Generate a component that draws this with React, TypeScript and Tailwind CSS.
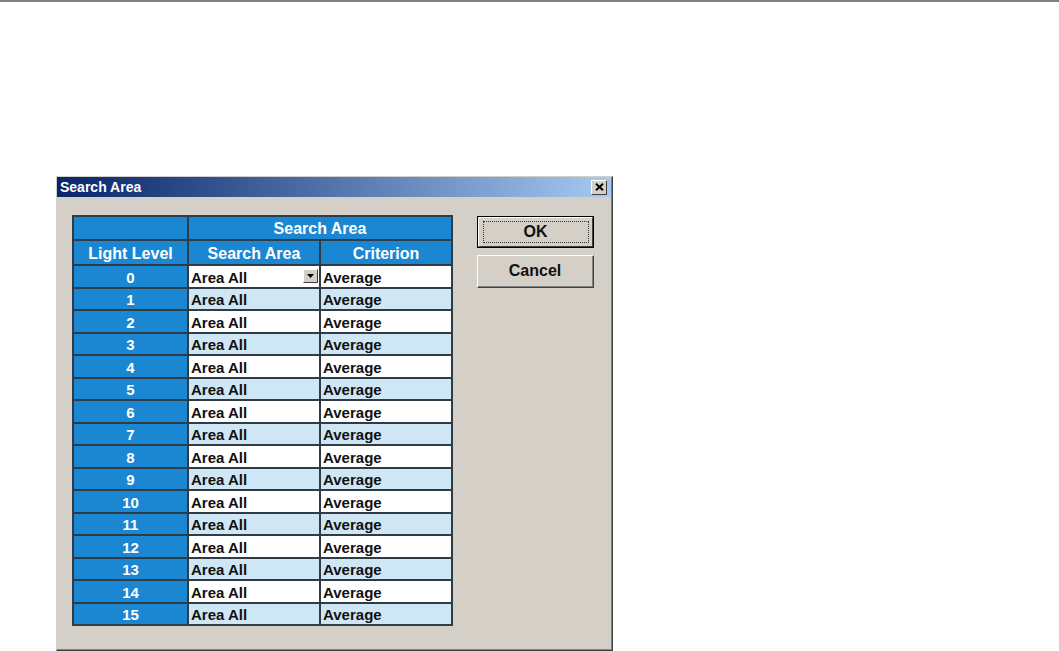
import { useState } from "react";

const LEVELS = Array.from({ length: 16 }, (_, i) => i);

const font = { fontFamily: '"Liberation Sans", Arial, sans-serif' };

// Small down-arrow button used by the combo cell
const ComboButton = () => (
  <span className="flex h-[14px] w-[15px] items-center justify-center border border-t-white border-l-white border-r-[#404040] border-b-[#404040] bg-[#d4d0c8]">
    <svg width="7" height="4" viewBox="0 0 7 4">
      <path d="M0 0h7L3.5 4z" fill="#000" />
    </svg>
  </span>
);

const App = () => {
  const [selected] = useState(0);

  return (
    <div className="min-h-[651px] bg-white" style={font}>
      <div className="h-[2px] bg-[#808080]" />

      <div className="ml-[56px] mt-[174px] w-[557px] border border-t-[#d4d0c8] border-l-[#d4d0c8] border-r-[#404040] border-b-[#404040] bg-[#d4d0c8]">
        <div className="border-r border-b border-r-[#808080] border-b-[#808080]">
          {/* title bar */}
          <div className="flex h-[20px] items-center justify-between bg-gradient-to-r from-[#0a246a] to-[#a6caf0] pl-[3px] pr-[4px]">
            <span className="text-[14px] font-bold leading-none text-white">Search Area</span>
            <span className="flex h-[15px] w-[16px] items-center justify-center border border-t-white border-l-white border-r-[#404040] border-b-[#404040] bg-[#d4d0c8]">
              <svg width="9" height="8" viewBox="0 0 9 8">
                <path d="M1 0.8L8 7.2M8 0.8L1 7.2" stroke="#000" strokeWidth="2" />
              </svg>
            </span>
          </div>

          <div className="flex items-start gap-[24px] pl-[15px] pr-[18px] pt-[18px] pb-[23px]">
            {/* level table */}
            <div className="grid grid-cols-[113px_130px_130px] gap-[2px] bg-[#2f3b45] p-[2px] text-[15px] font-bold leading-none">
              <div className="h-[22px] bg-[#1b87d2]" />
              <div className="col-span-2 flex h-[22px] items-center justify-center bg-[#1b87d2] pt-[2px] text-[16px] text-white">
                Search Area
              </div>
              <div className="flex h-[23px] items-center justify-center bg-[#1b87d2] pt-[2px] text-[16px] text-white">
                Light Level
              </div>
              <div className="flex h-[23px] items-center justify-center bg-[#1b87d2] pt-[2px] text-[16px] text-white">
                Search Area
              </div>
              <div className="flex h-[23px] items-center justify-center bg-[#1b87d2] pt-[2px] text-[16px] text-white">
                Criterion
              </div>

              {LEVELS.map((lvl) => {
                const rowBg = lvl % 2 === 0 ? "bg-white" : "bg-[#cfe7f5]";
                return (
                  <div key={lvl} className="contents">
                    <div className="flex h-[20.5px] items-center justify-center bg-[#1b87d2] pt-[2px] text-white">
                      {lvl}
                    </div>
                    <div className={`flex h-[20.5px] items-center justify-between pl-[2px] pr-[1px] text-[#111] ${rowBg}`}>
                      <span className="pt-[2px]">Area All</span>
                      {lvl === selected && <ComboButton />}
                    </div>
                    <div className={`flex h-[20.5px] items-center pl-[2px] pt-[2px] text-[#111] ${rowBg}`}>
                      Average
                    </div>
                  </div>
                );
              })}
            </div>

            {/* dialog buttons */}
            <div className="flex flex-col gap-[7px] pt-[1px]">
              <button className="h-[32px] w-[117px] border border-black bg-[#d4d0c8]">
                <div className="flex h-full items-center justify-center border border-t-white border-l-white border-r-[#404040] border-b-[#404040]">
                  <div className="flex h-[22px] w-[106px] items-center justify-center border border-dotted border-[#333] text-[16px] font-bold text-[#111]">
                    OK
                  </div>
                </div>
              </button>
              <button className="h-[33px] w-[117px] border border-t-white border-l-white border-r-[#404040] border-b-[#404040] bg-[#d4d0c8]">
                <div className="flex h-full items-center justify-center border-r border-b border-r-[#808080] border-b-[#808080] text-[16px] font-bold text-[#111]">
                  Cancel
                </div>
              </button>
            </div>
          </div>
        </div>
      </div>
    </div>
  );
};

export default App;
